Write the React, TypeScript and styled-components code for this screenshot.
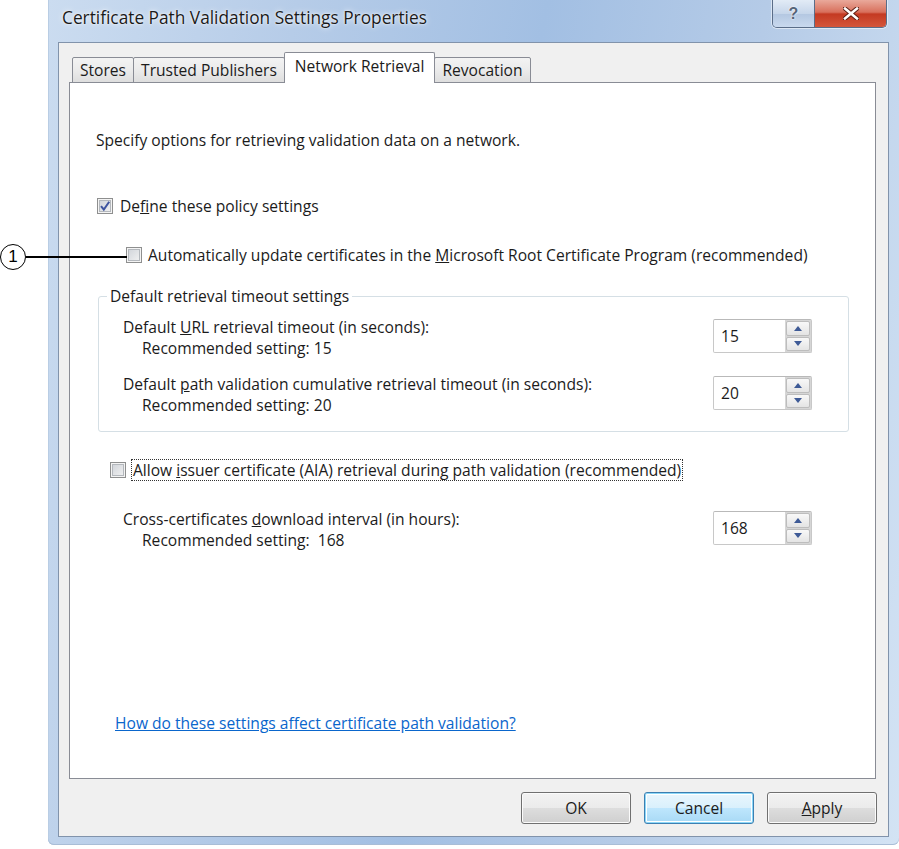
import styled, { createGlobalStyle } from "styled-components";

const GlobalStyle = createGlobalStyle`
  html, body {
    margin: 0;
    padding: 0;
    background: #fff;
  }
  body {
    font-family: "Open Sans", "Noto Sans", sans-serif;
    color: #1b1b1b;
  }
`;

const Page = styled.div`
  position: relative;
  width: 899px;
  height: 849px;
  overflow: hidden;
`;

const Window = styled.div`
  margin-left: 48px;
  width: 851px;
  height: 845px;
  box-sizing: border-box;
  padding: 0 10px 8px 10px;
  display: flex;
  flex-direction: column;
  background: linear-gradient(
    100deg,
    #cbdcf0 0%,
    #b6cce8 25%,
    #a2bfe3 50%,
    #b5cbe7 72%,
    #d3e3f4 100%
  );
  border-radius: 0 0 6px 6px;
  box-shadow: inset 0 -1px 0 #a9bdd6, inset 1px 0 0 #b9cde4;
`;

const TitleBar = styled.div`
  height: 42px;
  display: flex;
  align-items: flex-start;
  justify-content: space-between;
`;

const Title = styled.div`
  margin: 8px 0 0 4px;
  font-size: 17.3px;
  line-height: 20px;
  color: #1a1a1a;
  text-shadow: 0 0 6px rgba(255, 255, 255, 0.9), 0 0 2px #fff;
`;

const Captions = styled.div`
  display: flex;
  height: 27px;
  margin-right: 2px;
  border: 1px solid #5a6d88;
  border-top: none;
  border-radius: 0 0 5px 5px;
  overflow: hidden;
  box-shadow: 0 0 0 1px rgba(255, 255, 255, 0.5);
`;

const HelpButton = styled.div`
  width: 41px;
  display: flex;
  align-items: center;
  justify-content: center;
  border-right: 1px solid #5a6d88;
  background: linear-gradient(#e2ebf6, #c6d6ea 50%, #b3c7e1 51%, #c9d9ee);
  font-family: "Liberation Sans", sans-serif;
  font-weight: bold;
  font-size: 16px;
  color: #55657a;
  text-shadow: 0 0 2px #fff, 0 0 1px #fff;
`;

const CloseButton = styled.div`
  width: 71px;
  display: flex;
  align-items: center;
  justify-content: center;
  background: linear-gradient(#e9a99b, #d8705c 45%, #c43a22 52%, #d4563b);
`;

const Client = styled.div`
  flex: 1;
  display: flex;
  flex-direction: column;
  background: #f0f0f0;
  border: 1px solid #8193ab;
  padding: 9px 12px 0 10px;
`;

const TabStrip = styled.div`
  position: relative;
  z-index: 1;
  display: flex;
  align-items: flex-end;
  height: 31px;
  margin-bottom: -1px;
  padding-left: 3px;
`;

const Tab = styled.div<{ $active?: boolean }>`
  height: ${(p) => (p.$active ? 31 : 26)}px;
  box-sizing: border-box;
  display: flex;
  align-items: center;
  padding: ${(p) => (p.$active ? "0 10px 4px" : "0 7px")};
  margin-right: -1px;
  border: 1px solid #898c95;
  border-bottom: ${(p) => (p.$active ? "none" : "1px solid #898c95")};
  border-radius: 2px 2px 0 0;
  background: ${(p) =>
    p.$active ? "#fff" : "linear-gradient(#f3f3f3, #ebebeb 50%, #dedede)"};
  font-size: 15.6px;
  line-height: 20px;
  white-space: nowrap;
`;

const Panel = styled.div`
  height: 697px;
  box-sizing: border-box;
  display: flex;
  flex-direction: column;
  background: #fff;
  border: 1px solid #898c95;
  padding: 47px 0 45px 0;
  font-size: 15.6px;
  line-height: 20px;
`;

const Line = styled.div<{ $left: number; $top?: number }>`
  margin-left: ${(p) => p.$left}px;
  margin-top: ${(p) => p.$top ?? 0}px;
  white-space: nowrap;
`;

const CheckRow = styled.label<{ $left: number; $top: number; $gap: number }>`
  display: flex;
  align-items: center;
  gap: ${(p) => p.$gap}px;
  height: 20px;
  margin-left: ${(p) => p.$left}px;
  margin-top: ${(p) => p.$top}px;
  white-space: nowrap;
`;

const Box = styled.span`
  width: 16px;
  height: 16px;
  flex: none;
  box-sizing: border-box;
  display: flex;
  align-items: center;
  justify-content: center;
  border: 1px solid #8e8f8f;
  background: linear-gradient(135deg, #cdd1d7, #f4f4f4);
  box-shadow: inset 0 0 0 1px #f4f4f4, inset 0 0 0 2px #b4b8bd;
`;

const Focus = styled.span`
  outline: 1px dotted #333;
  outline-offset: 0;
  padding: 0 1px;
`;

const Group = styled.fieldset`
  min-width: 0;
  margin: 21px 26px 0 28px;
  padding: 11px 36px 15px 24px;
  border: 1px solid #d5dfe5;
  border-radius: 3px;
`;

const Legend = styled.legend`
  margin-left: -16px;
  padding: 0 3px;
  line-height: 20px;
`;

const SettingRow = styled.div<{ $top?: number; $right?: number; $left?: number }>`
  display: flex;
  justify-content: space-between;
  align-items: flex-start;
  margin-top: ${(p) => p.$top ?? 0}px;
  margin-left: ${(p) => p.$left ?? 0}px;
  margin-right: ${(p) => p.$right ?? 0}px;
`;

const SettingText = styled.div`
  line-height: 21px;
  white-space: nowrap;
`;

const Hint = styled.div`
  padding-left: 19px;
`;

const Spinner = styled.div`
  display: flex;
  width: 99px;
  height: 34px;
  box-sizing: border-box;
  margin-top: 2px;
  border: 1px solid #c8c8c8;
  border-top-color: #b9b9b9;
  border-radius: 2px;
  background: #fff;
`;

const SpinValue = styled.div`
  flex: 1;
  display: flex;
  align-items: center;
  padding-left: 7px;
  font-size: 15.6px;
`;

const SpinButtons = styled.div`
  width: 24px;
  display: flex;
  flex-direction: column;
  gap: 1px;
  padding: 1px;
  background: #d6d6d6;
`;

const SpinButton = styled.div`
  flex: 1;
  display: flex;
  align-items: center;
  justify-content: center;
  border: 1px solid #bdbdbd;
  border-radius: 2px;
  background: linear-gradient(#f8f8f8, #e4e4e4);
`;

const HelpLink = styled.a`
  margin: auto 0 0 45px;
  color: #0a66cc;
  text-decoration: underline;
  white-space: nowrap;
`;

const ButtonRow = styled.div`
  display: flex;
  justify-content: flex-end;
  gap: 13px;
  margin: 13px -1px 0 0;
`;

const Button = styled.div<{ $default?: boolean }>`
  width: 110px;
  height: 32px;
  box-sizing: border-box;
  display: flex;
  align-items: center;
  justify-content: center;
  border: 1px solid ${(p) => (p.$default ? "#3c7fb1" : "#707070")};
  border-radius: 3px;
  background: ${(p) =>
    p.$default
      ? "linear-gradient(#eaf6fd, #d9f0fc 50%, #bee6fd 51%, #a7d9f5)"
      : "linear-gradient(#f2f2f2, #ebebeb 50%, #dddddd 51%, #cfcfcf)"};
  box-shadow: ${(p) =>
    p.$default ? "inset 0 0 0 1px #8cd7f8, inset 0 0 0 2px #fff" : "inset 0 0 0 1px #fbfbfb"};
  font-size: 15.6px;
`;

const Callout = styled.div`
  position: absolute;
  left: 0;
  top: 244px;
  display: flex;
  align-items: center;
`;

const CalloutCircle = styled.div`
  width: 26px;
  height: 26px;
  box-sizing: border-box;
  border: 1.5px solid #000;
  border-radius: 50%;
  display: flex;
  align-items: center;
  justify-content: center;
  font-family: "Liberation Sans", sans-serif;
  font-size: 17px;
  color: #000;
`;

const CalloutLine = styled.div`
  width: 101px;
  height: 2px;
  background: #000;
`;

function CheckBox({ checked }: { checked?: boolean }) {
  return (
    <Box>
      {checked ? (
        <svg width="12" height="12" viewBox="0 0 12 12">
          <path d="M2 6.2 L4.8 9.5 L10.2 1.8" fill="none" stroke="#3f55a0" strokeWidth="2" />
        </svg>
      ) : null}
    </Box>
  );
}

function Arrow({ up }: { up?: boolean }) {
  return (
    <svg width="8" height="5" viewBox="0 0 8 5">
      <path d={up ? "M0 5 L4 0 L8 5 Z" : "M0 0 L8 0 L4 5 Z"} fill="#3e5a96" />
    </svg>
  );
}

function NumberBox({ value }: { value: string }) {
  return (
    <Spinner>
      <SpinValue>{value}</SpinValue>
      <SpinButtons>
        <SpinButton>
          <Arrow up />
        </SpinButton>
        <SpinButton>
          <Arrow />
        </SpinButton>
      </SpinButtons>
    </Spinner>
  );
}

function App() {
  return (
    <Page>
      <GlobalStyle />
      <Window>
        <TitleBar>
          <Title>Certificate Path Validation Settings Properties</Title>
          <Captions>
            <HelpButton>?</HelpButton>
            <CloseButton>
              <svg width="16" height="13" viewBox="0 0 16 13">
                <path
                  d="M2 1.5 L14 11.5 M14 1.5 L2 11.5"
                  stroke="#5b1e14"
                  strokeWidth="4.5"
                  strokeLinecap="square"
                />
                <path
                  d="M2 1.5 L14 11.5 M14 1.5 L2 11.5"
                  stroke="#fff"
                  strokeWidth="2.5"
                  strokeLinecap="square"
                />
              </svg>
            </CloseButton>
          </Captions>
        </TitleBar>
        <Client>
          <TabStrip>
            <Tab>Stores</Tab>
            <Tab>Trusted Publishers</Tab>
            <Tab $active>Network Retrieval</Tab>
            <Tab>Revocation</Tab>
          </TabStrip>
          <Panel>
            <Line $left={26}>Specify options for retrieving validation data on a network.</Line>
            <CheckRow $left={27} $top={46} $gap={7}>
              <CheckBox checked />
              <span>
                De<u>f</u>ine these policy settings
              </span>
            </CheckRow>
            <CheckRow $left={56} $top={29} $gap={6}>
              <CheckBox />
              <span>
                Automatically update certificates in the <u>M</u>icrosoft Root Certificate Program
                (recommended)
              </span>
            </CheckRow>
            <Group>
              <Legend>Default retrieval timeout settings</Legend>
              <SettingRow>
                <SettingText>
                  Default <u>U</u>RL retrieval timeout (in seconds):
                  <Hint>Recommended setting: 15</Hint>
                </SettingText>
                <NumberBox value="15" />
              </SettingRow>
              <SettingRow $top={15}>
                <SettingText>
                  Default <u>p</u>ath validation cumulative retrieval timeout (in seconds):
                  <Hint>Recommended setting: 20</Hint>
                </SettingText>
                <NumberBox value="20" />
              </SettingRow>
            </Group>
            <CheckRow $left={40} $top={28} $gap={6}>
              <CheckBox />
              <Focus>
                Allow <u>i</u>ssuer certificate (AIA) retrieval during path validation (recommended)
              </Focus>
            </CheckRow>
            <SettingRow $top={29} $left={53} $right={63}>
              <SettingText>
                Cross-certificates <u>d</u>ownload interval (in hours):
                <Hint>Recommended setting:&nbsp; 168</Hint>
              </SettingText>
              <NumberBox value="168" />
            </SettingRow>
            <HelpLink>How do these settings affect certificate path validation?</HelpLink>
          </Panel>
          <ButtonRow>
            <Button>OK</Button>
            <Button $default>Cancel</Button>
            <Button>
              <span>
                <u>A</u>pply
              </span>
            </Button>
          </ButtonRow>
        </Client>
      </Window>
      <Callout>
        <CalloutCircle>1</CalloutCircle>
        <CalloutLine />
      </Callout>
    </Page>
  );
}

export default App;
